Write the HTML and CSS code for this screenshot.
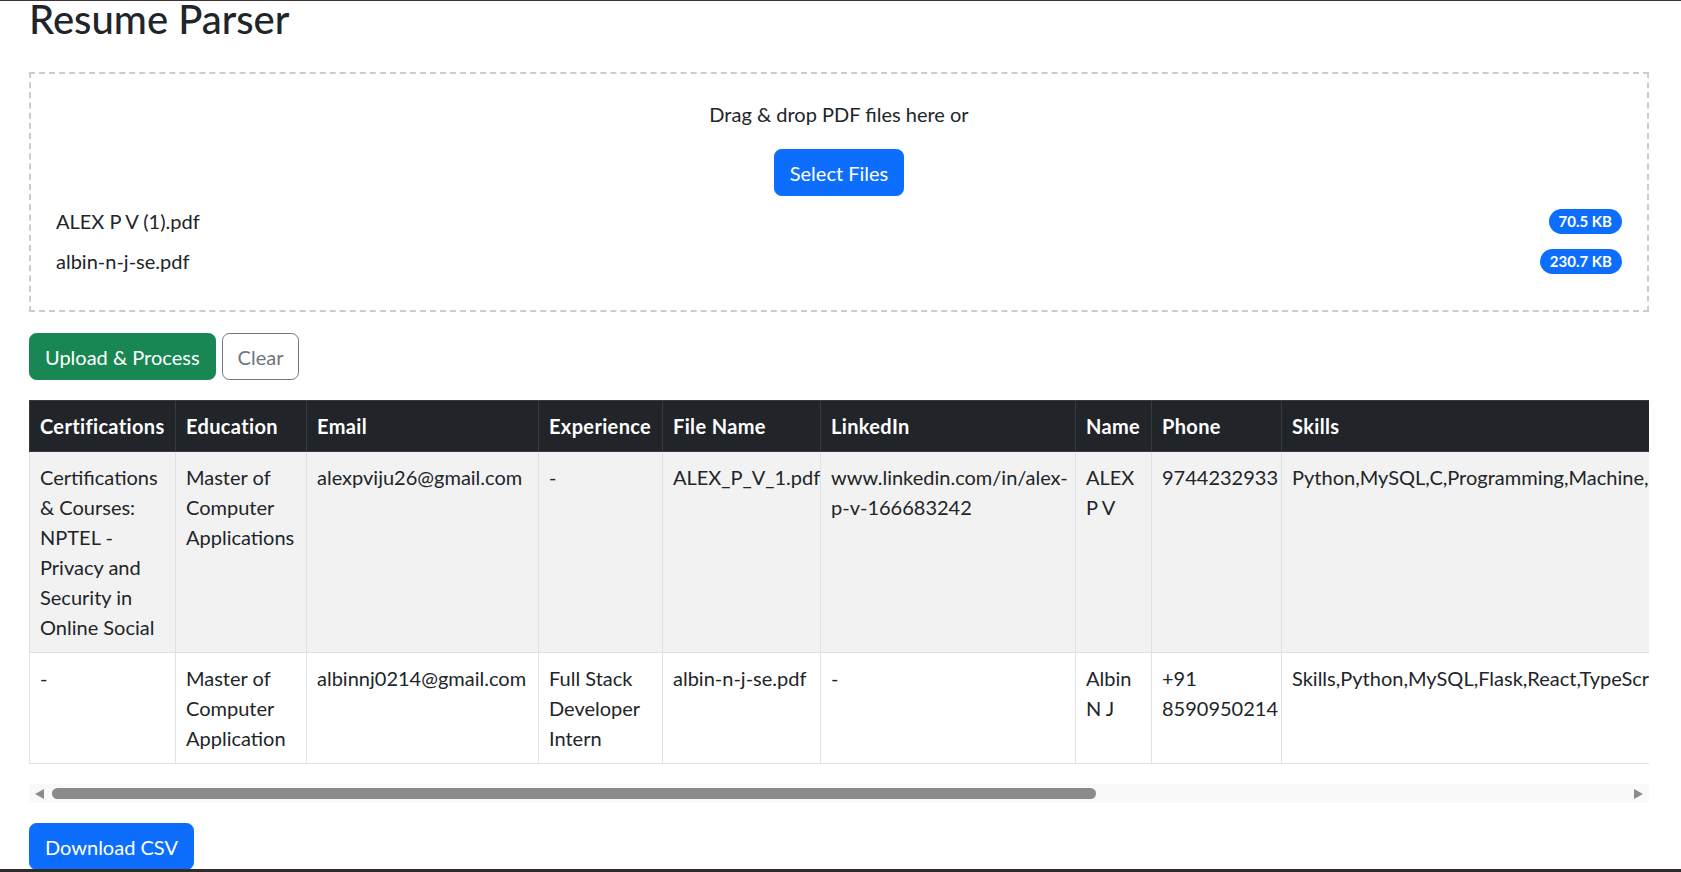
FILE: index.html
```html
<!DOCTYPE html>
<html lang="en">
<head>
<meta charset="utf-8">
<title>Resume Parser</title>
<link rel="stylesheet" href="styles.css">
</head>
<body>
<div class="frame-top"></div>
<main class="page">
  <h2 class="title">Resume Parser</h2>

  <section class="dropzone">
    <p class="drop-text">Drag &amp; drop PDF files here or</p>
    <div class="drop-action"><button class="btn btn-primary" type="button">Select Files</button></div>
    <ul class="file-list">
      <li class="file-row"><span>ALEX P V (1).pdf</span><span class="badge">70.5 KB</span></li>
      <li class="file-row"><span>albin-n-j-se.pdf</span><span class="badge">230.7 KB</span></li>
    </ul>
  </section>

  <div class="actions">
    <button class="btn btn-success" type="button">Upload &amp; Process</button>
    <button class="btn btn-outline" type="button">Clear</button>
  </div>

  <div class="table-wrap">
    <table class="results">
      <colgroup>
        <col class="c-cert"><col class="c-edu"><col class="c-email"><col class="c-exp"><col class="c-file"><col class="c-link"><col class="c-name"><col class="c-phone"><col class="c-skills">
      </colgroup>
      <thead>
        <tr>
          <th>Certifications</th><th>Education</th><th>Email</th><th>Experience</th><th>File Name</th><th>LinkedIn</th><th>Name</th><th>Phone</th><th>Skills</th>
        </tr>
      </thead>
      <tbody>
        <tr class="odd">
          <td>Certifications &amp; Courses: NPTEL - Privacy and Security in Online Social</td>
          <td>Master of Computer Applications</td>
          <td>alexpviju26@gmail.com</td>
          <td>-</td>
          <td class="nw">ALEX_P_V_1.pdf</td>
          <td>www.linkedin.com/in/alex-p-v-166683242</td>
          <td>ALEX P V</td>
          <td>9744232933</td>
          <td class="nw">Python,MySQL,C,Programming,Machine,Learning,Deep,Learning,Data,Analysis,Pandas,NumPy,Flask,Django,HTML,CSS,JavaScript,Git</td>
        </tr>
        <tr>
          <td>-</td>
          <td>Master of Computer Application</td>
          <td>albinnj0214@gmail.com</td>
          <td>Full Stack Developer Intern</td>
          <td class="nw">albin-n-j-se.pdf</td>
          <td>-</td>
          <td>Albin N J</td>
          <td>+91 8590950214</td>
          <td class="nw">Skills,Python,MySQL,Flask,React,TypeScript,JavaScript,Node.js,Express,MongoDB,PostgreSQL,Docker,Git,REST,APIs</td>
        </tr>
      </tbody>
    </table>
  </div>

  <div class="hscroll" aria-hidden="true">
    <span class="arrow arrow-left"></span>
    <div class="track"><div class="thumb"></div></div>
    <span class="arrow arrow-right"></span>
  </div>

  <div class="download">
    <button class="btn btn-primary" type="button">Download CSV</button>
  </div>
</main>
<div class="frame-bottom"></div>
</body>
</html>
```
FILE: styles.css
```css
* { box-sizing: border-box; }

html, body { margin: 0; padding: 0; background: #fff; }

body {
  font-family: Lato, "Liberation Sans", sans-serif;
  font-size: 20px;
  line-height: 30px;
  color: #212529;
  overflow: hidden;
}

.frame-top {
  position: fixed;
  top: 0; left: 0; right: 0;
  height: 1px;
  background: #3d3537;
  z-index: 10;
}
.frame-bottom {
  position: fixed;
  bottom: 0; left: 0; right: 0;
  height: 3px;
  background: #2f2b2c;
  z-index: 10;
}

.page {
  width: 1620px;
  margin-left: 29px;
}

.title {
  font-size: 40px;
  line-height: 38px;
  font-weight: 500;
  margin: 0 0 34px;
  color: #212529;
}

/* drop zone */
.dropzone {
  border: 2px dashed #cccccc;
  padding: 25px 25px 29px;
}
.drop-text {
  margin: 0 0 20px;
  text-align: center;
}
.drop-action {
  display: flex;
  justify-content: center;
}
.file-list {
  list-style: none;
  margin: 5px 0 0;
  padding: 0;
}
.file-row {
  display: flex;
  justify-content: space-between;
  align-items: center;
  padding: 5px 0;
}
.badge {
  background: #0d6efd;
  color: #fff;
  font-size: 15px;
  font-weight: 700;
  line-height: 15px;
  padding: 5px 10px;
  border-radius: 999px;
}

/* buttons */
.btn {
  font-family: inherit;
  font-size: 20px;
  line-height: 30px;
  padding: 7.5px 15px;
  border: 1px solid transparent;
  border-radius: 7.5px;
  cursor: pointer;
}
.btn-primary { background: #0d6efd; border-color: #0d6efd; color: #fff; }
.btn-success { background: #198754; border-color: #198754; color: #fff; }
.btn-outline { background: #fff; border-color: #6c757d; color: #6c757d; }

.actions {
  display: flex;
  gap: 6px;
  margin-top: 21px;
}

/* table */
.table-wrap {
  margin-top: 20px;
  overflow: hidden;
}
.results {
  width: 2466px;
  table-layout: fixed;
  border-collapse: collapse;
  margin-bottom: 20px;
}
.c-cert { width: 146px; }
.c-edu { width: 131px; }
.c-email { width: 232px; }
.c-exp { width: 124px; }
.c-file { width: 158px; }
.c-link { width: 255px; }
.c-name { width: 76px; }
.c-phone { width: 130px; }
.c-skills { width: 1214px; }

.results th,
.results td {
  padding: 10px;
  text-align: left;
  vertical-align: top;
  border: 1px solid #dee2e6;
}
.results th {
  background: #212529;
  color: #fff;
  font-weight: 700;
  letter-spacing: 0.35px;
  border-color: #373b3e;
}
.results tr.odd td { background: #f2f2f2; }
.results .nw { white-space: nowrap; }

/* horizontal scrollbar of the table */
.hscroll {
  display: flex;
  align-items: center;
  height: 19px;
  background: #f9f9f9;
  padding: 0 6px;
  gap: 8px;
}
.track {
  flex: 1;
  height: 11px;
}
.thumb {
  width: 1044px;
  height: 11px;
  border-radius: 6px;
  background: #8b8b8b;
}
.arrow {
  width: 0;
  height: 0;
  border-top: 5px solid transparent;
  border-bottom: 5px solid transparent;
}
.arrow-left { border-right: 9px solid #8b8b8b; }
.arrow-right { border-left: 9px solid #8b8b8b; }

.download {
  margin-top: 20px;
}
```
